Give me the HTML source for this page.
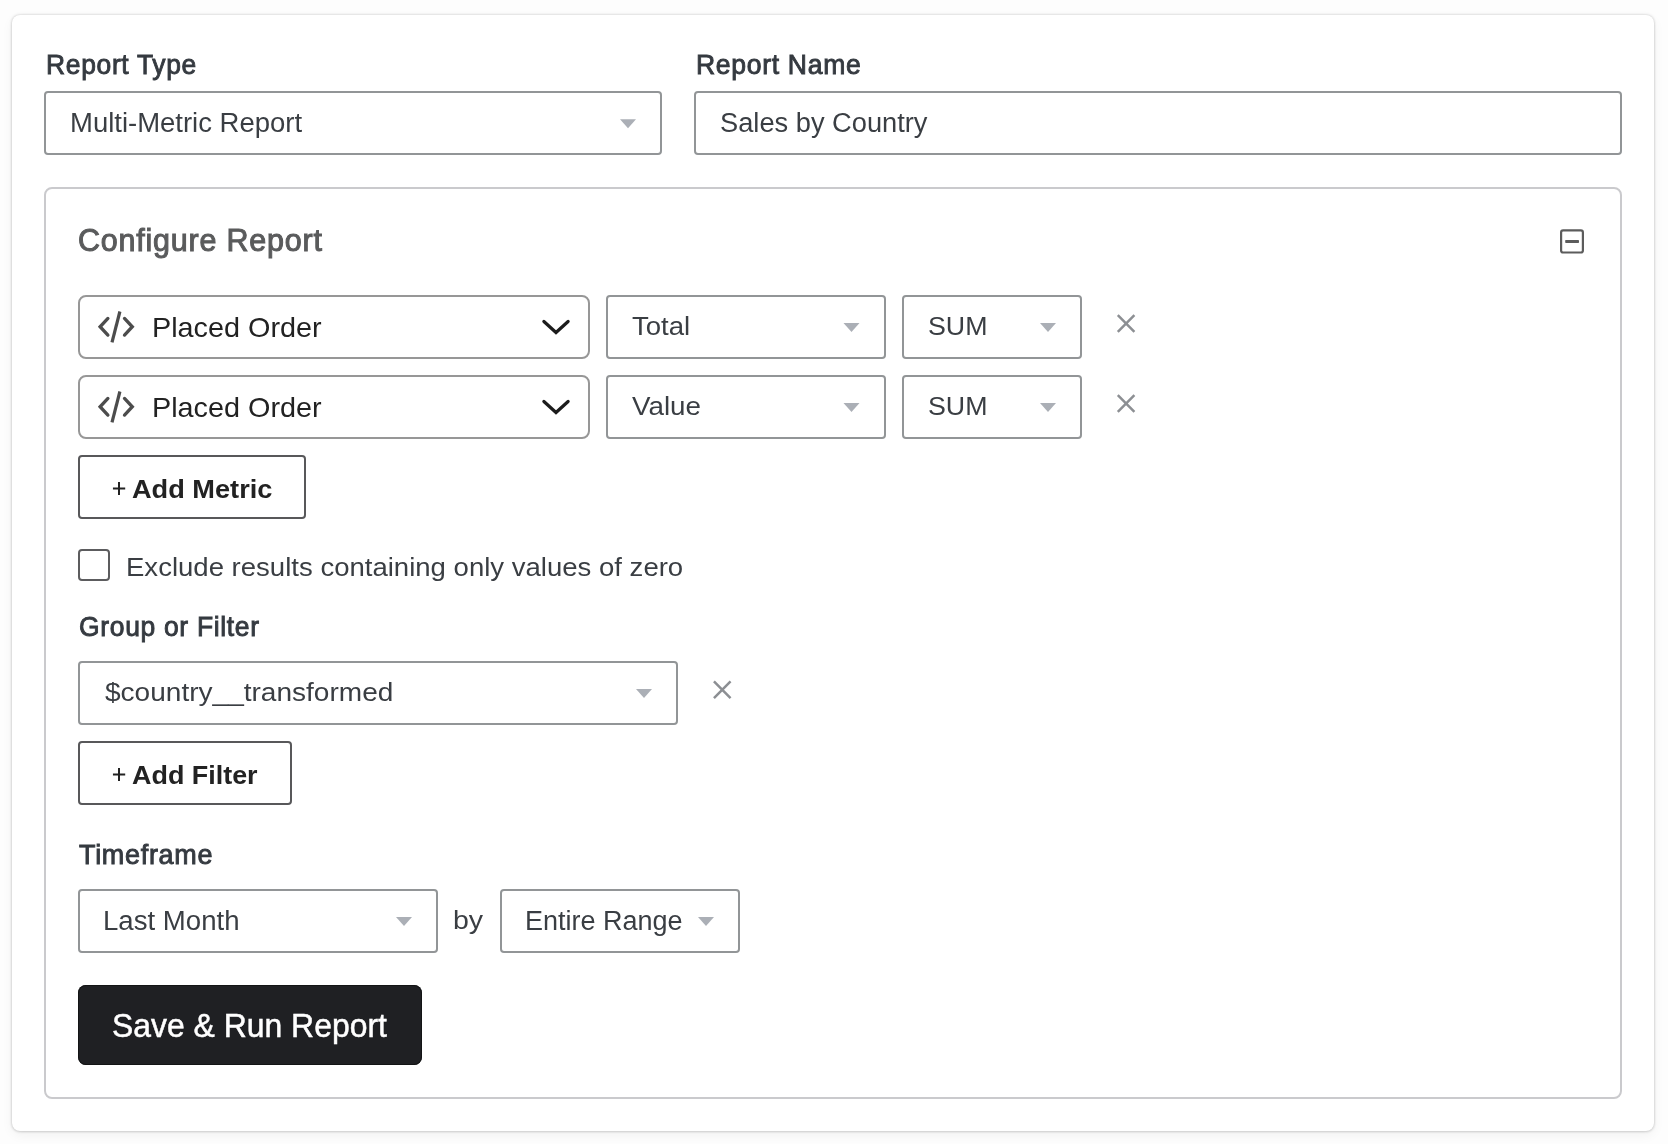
<!DOCTYPE html>
<html><head><meta charset="utf-8"><title>Report</title>
<style>
html,body{margin:0;padding:0}
body{width:1668px;height:1144px;background:#fdfdfd;position:relative;overflow:hidden;font-family:"Liberation Sans", sans-serif}
.b{position:absolute;box-sizing:content-box}
.t{position:absolute;white-space:pre;line-height:1;transform-origin:0 0;font-family:"Liberation Sans", sans-serif}
svg{position:absolute;left:0;top:0}
#txt{position:absolute;left:0;top:0;width:1668px;height:1144px;will-change:transform}
</style></head><body>
<div class="b" style="left:12px;top:15px;width:1642px;height:1116px;border-radius:8px;background:#fff;box-shadow:0 0 3px rgba(0,0,0,.2),0 1px 3px rgba(0,0,0,.08),0 4px 12px rgba(0,0,0,.05)"></div>
<div class="b" style="left:44px;top:91px;width:614px;height:60px;border:2px solid #929597;border-radius:4px;background:#fff;"></div>
<div class="b" style="left:694px;top:91px;width:924px;height:60px;border:2px solid #929597;border-radius:4px;background:#fff;"></div>
<div class="b" style="left:44px;top:187px;width:1574px;height:908px;border:2px solid #cacacd;border-radius:8px;background:#fff;"></div>
<div class="b" style="left:78px;top:295px;width:508px;height:60px;border:2px solid #979797;border-radius:8px;background:#fff;"></div>
<div class="b" style="left:606px;top:295px;width:276px;height:60px;border:2px solid #929597;border-radius:4px;background:#fff;"></div>
<div class="b" style="left:902px;top:295px;width:176px;height:60px;border:2px solid #929597;border-radius:4px;background:#fff;"></div>
<div class="b" style="left:78px;top:375px;width:508px;height:60px;border:2px solid #979797;border-radius:8px;background:#fff;"></div>
<div class="b" style="left:606px;top:375px;width:276px;height:60px;border:2px solid #929597;border-radius:4px;background:#fff;"></div>
<div class="b" style="left:902px;top:375px;width:176px;height:60px;border:2px solid #929597;border-radius:4px;background:#fff;"></div>
<div class="b" style="left:78px;top:455px;width:224px;height:60px;border:2px solid #58585a;border-radius:4px;background:#fff;"></div>
<div class="b" style="left:78px;top:549px;width:28px;height:28px;border:2px solid #5c5c5e;border-radius:4px;background:#fff;"></div>
<div class="b" style="left:78px;top:661px;width:596px;height:60px;border:2px solid #929597;border-radius:4px;background:#fff;"></div>
<div class="b" style="left:78px;top:741px;width:210px;height:60px;border:2px solid #58585a;border-radius:4px;background:#fff;"></div>
<div class="b" style="left:78px;top:889px;width:356px;height:60px;border:2px solid #929597;border-radius:4px;background:#fff;"></div>
<div class="b" style="left:500px;top:889px;width:236px;height:60px;border:2px solid #929597;border-radius:4px;background:#fff;"></div>
<div class="b" style="left:78px;top:985px;width:344px;height:80px;border-radius:8px;background:#1f2023;box-shadow:inset 0 0 0 1px #131415"></div>
<svg width="1668" height="1144" viewBox="0 0 1668 1144">
<path d="M620 119.25h16l-8.0 9z" fill="#abafb6"/>
<path d="M107.9 318.45L100.1 326.75L107.9 335.05M124.5 318.45L132.3 326.75L124.5 335.05" stroke="#4c4c4c" stroke-width="3.3" fill="none" stroke-linecap="round" stroke-linejoin="miter"/>
<path d="M119.9 311.5L112 342.3" stroke="#4c4c4c" stroke-width="3.2" fill="none"/>
<path d="M543.9 321.45L556 332.55L568.1 321.45" stroke="#1c1c1c" stroke-width="3.2" fill="none" stroke-linecap="round" stroke-linejoin="miter"/>
<path d="M843.5 323h16l-8.0 9z" fill="#abafb6"/>
<path d="M1040 323h16l-8.0 9z" fill="#abafb6"/>
<path d="M1117.8 315.2L1134.4 331.8M1134.4 315.2L1117.8 331.8" stroke="#8c8f93" stroke-width="2.5" fill="none"/>
<path d="M107.9 398.45L100.1 406.75L107.9 415.05M124.5 398.45L132.3 406.75L124.5 415.05" stroke="#4c4c4c" stroke-width="3.3" fill="none" stroke-linecap="round" stroke-linejoin="miter"/>
<path d="M119.9 391.5L112 422.3" stroke="#4c4c4c" stroke-width="3.2" fill="none"/>
<path d="M543.9 401.45L556 412.55L568.1 401.45" stroke="#1c1c1c" stroke-width="3.2" fill="none" stroke-linecap="round" stroke-linejoin="miter"/>
<path d="M843.5 403h16l-8.0 9z" fill="#abafb6"/>
<path d="M1040 403h16l-8.0 9z" fill="#abafb6"/>
<path d="M1117.8 395.2L1134.4 411.8M1134.4 395.2L1117.8 411.8" stroke="#8c8f93" stroke-width="2.5" fill="none"/>
<path d="M636 689h16l-8.0 9z" fill="#abafb6"/>
<path d="M713.95 681.45L730.55 698.05M730.55 681.45L713.95 698.05" stroke="#8c8f93" stroke-width="2.5" fill="none"/>
<path d="M396 917h16l-8.0 9z" fill="#abafb6"/>
<path d="M698 917h16l-8.0 9z" fill="#abafb6"/>
<path d="M112.95 488.55H125.2M119 481.9V495.1" stroke="#222" stroke-width="2" fill="none"/>
<path d="M112.95 774.55H125.2M119 767.9V781.1" stroke="#222" stroke-width="2" fill="none"/>
<rect x="1561.1" y="230.4" width="21.8" height="22.1" rx="2" fill="none" stroke="#5c5c5c" stroke-width="2.2"/>
<rect x="1565.2" y="239.9" width="13.8" height="3" rx="0.7" fill="#5c5c5c"/>
</svg>
<div id="txt">
<div class="t" style="left:46.05px;top:50.84px;font-size:27.25px;font-weight:400;color:#353a40;transform:scaleX(0.9691);letter-spacing:0.026em;-webkit-text-stroke:0.033em #353a40;">Report Type</div>
<div class="t" style="left:696.04px;top:50.84px;font-size:27.25px;font-weight:400;color:#353a40;transform:scaleX(0.9737);letter-spacing:0.026em;-webkit-text-stroke:0.033em #353a40;">Report Name</div>
<div class="t" style="left:69.70px;top:108.62px;font-size:27.39px;font-weight:400;color:#3a3e43;transform:scaleX(1.0037);">Multi-Metric Report</div>
<div class="t" style="left:720.04px;top:108.62px;font-size:27.39px;font-weight:400;color:#3a3e43;transform:scaleX(0.9953);">Sales by Country</div>
<div class="t" style="left:78.39px;top:224.83px;font-size:30.43px;font-weight:400;color:#5a5b5c;transform:scaleX(1.0014);letter-spacing:0.026em;-webkit-text-stroke:0.033em #5a5b5c;">Configure Report</div>
<div class="t" style="left:151.80px;top:312.61px;font-size:28.41px;font-weight:400;color:#222222;transform:scaleX(1.0133);">Placed Order</div>
<div class="t" style="left:927.66px;top:312.63px;font-size:26.67px;font-weight:400;color:#3a3e43;transform:scaleX(1.0048);">SUM</div>
<div class="t" style="left:151.80px;top:392.61px;font-size:28.41px;font-weight:400;color:#222222;transform:scaleX(1.0133);">Placed Order</div>
<div class="t" style="left:927.66px;top:392.63px;font-size:26.67px;font-weight:400;color:#3a3e43;transform:scaleX(1.0048);">SUM</div>
<div class="t" style="left:632.45px;top:312.63px;font-size:26.67px;font-weight:400;color:#3a3e43;transform:scaleX(1.0345);">Total</div>
<div class="t" style="left:632.22px;top:392.63px;font-size:26.67px;font-weight:400;color:#3a3e43;transform:scaleX(1.0417);">Value</div>
<div class="t" style="left:132.28px;top:475.63px;font-size:26.67px;font-weight:700;color:#222;transform:scaleX(1.0193);">Add Metric</div>
<div class="t" style="left:125.90px;top:553.78px;font-size:26.02px;font-weight:400;color:#3a3e43;transform:scaleX(1.0585);">Exclude results containing only values of zero</div>
<div class="t" style="left:78.71px;top:612.84px;font-size:27.25px;font-weight:400;color:#353a40;transform:scaleX(0.9703);letter-spacing:0.026em;-webkit-text-stroke:0.033em #353a40;">Group or Filter</div>
<div class="t" style="left:104.72px;top:680.01px;font-size:25.75px;font-weight:400;color:#3a3e43;transform:scaleX(1.0889);">$country__transformed</div>
<div class="t" style="left:132.29px;top:761.63px;font-size:26.67px;font-weight:700;color:#222;transform:scaleX(1.0097);">Add Filter</div>
<div class="t" style="left:78.63px;top:840.74px;font-size:27.25px;font-weight:400;color:#353a40;transform:scaleX(0.9893);letter-spacing:0.026em;-webkit-text-stroke:0.033em #353a40;">Timeframe</div>
<div class="t" style="left:102.79px;top:906.62px;font-size:27.39px;font-weight:400;color:#3a3e43;transform:scaleX(1.0078);">Last Month</div>
<div class="t" style="left:453.30px;top:907.89px;font-size:25.90px;font-weight:400;color:#3a3e43;transform:scaleX(1.1013);">by</div>
<div class="t" style="left:524.84px;top:906.62px;font-size:27.39px;font-weight:400;color:#3a3e43;transform:scaleX(0.9862);">Entire Range</div>
<div class="t" style="left:111.92px;top:1009.94px;font-size:32.90px;font-weight:400;color:#ffffff;transform:scaleX(0.9700);-webkit-text-stroke:0.015em #fff;">Save &amp; Run Report</div>
</div>
</body></html>
